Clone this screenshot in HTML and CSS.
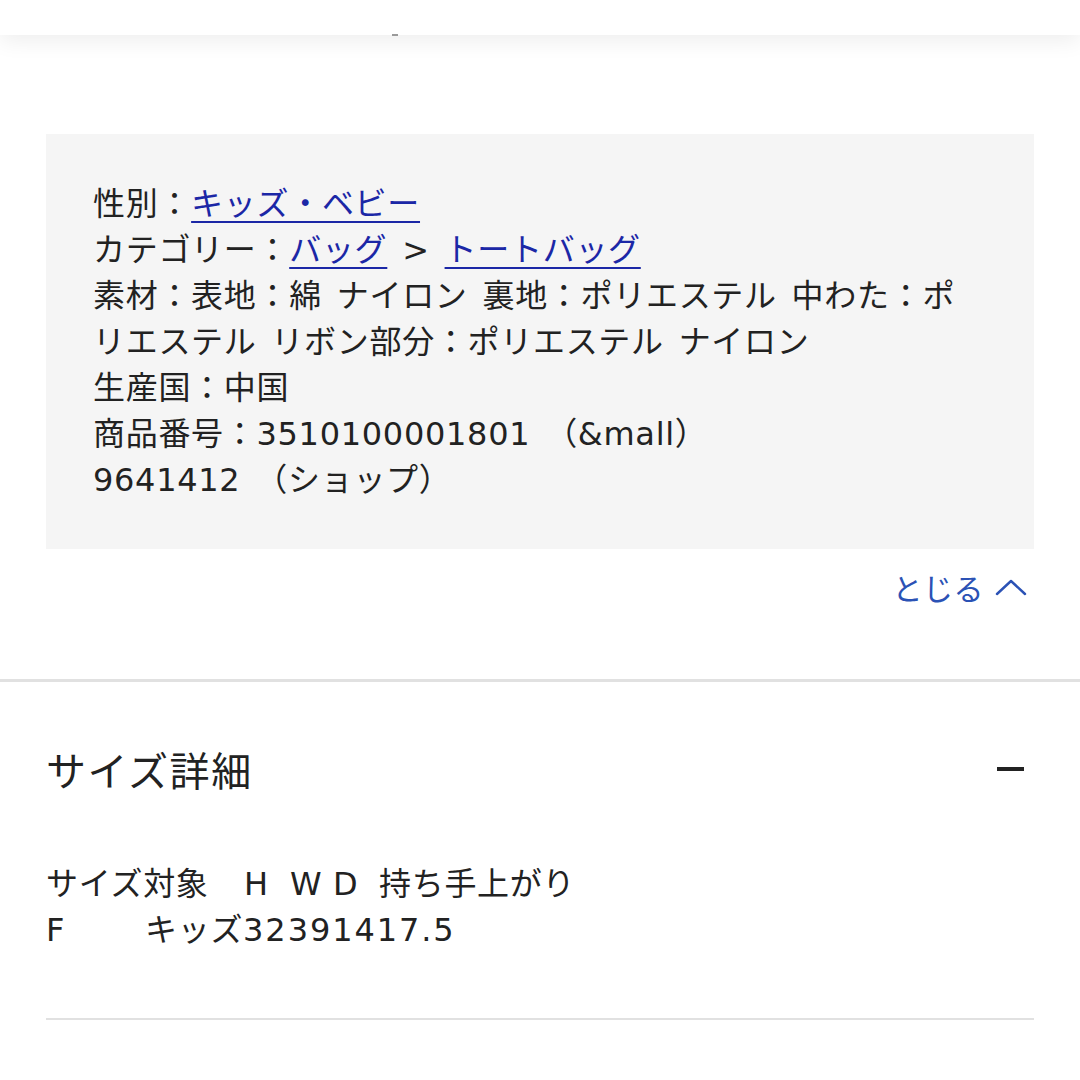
FILE: index.html
```html
<!DOCTYPE html>
<html lang="ja">
<head>
<meta charset="utf-8">
<title>商品詳細</title>
<link rel="stylesheet" href="styles.css">
</head>
<body>
<header class="topbar"><span class="topbar-mark"></span></header>
<main class="page">
  <section class="spec">
    <div class="spec-box">
      <div class="spec-line">性別：<a class="spec-link" href="#">キッズ・ベビー</a></div>
      <div class="spec-line">カテゴリー：<a class="spec-link" href="#">バッグ</a> &gt; <a class="spec-link" href="#">トートバッグ</a></div>
      <div class="spec-line">素材：表地：綿 ナイロン 裏地：ポリエステル 中わた：ポリエステル リボン部分：ポリエステル ナイロン</div>
      <div class="spec-line">生産国：中国</div>
      <div class="spec-line">商品番号：3510100001801 （&amp;mall）</div>
      <div class="spec-line">9641412 （ショップ）</div>
    </div>
    <div class="spec-toggle">
      <a class="toggle-link" href="#">とじる<svg class="chevron" width="32" height="18" viewBox="0 0 32 18" aria-hidden="true"><path d="M2 16 L16 3 L30 16" fill="none" stroke="currentColor" stroke-width="2.4" stroke-linecap="round" stroke-linejoin="round"/></svg></a>
    </div>
  </section>
  <div class="divider"></div>
  <section class="size">
    <div class="size-head">
      <h2 class="size-title">サイズ詳細</h2>
      <span class="minus"></span>
    </div>
    <div class="size-table">
      <div class="size-row">
        <span class="cell c-target">サイズ対象</span><span class="cell c-h">H</span><span class="cell c-w">W</span><span class="cell c-d">D</span><span class="cell">持ち手上がり</span>
      </div>
      <div class="size-row">
        <span class="cell c-f">F</span><span class="cell c-kids">キッズ</span><span class="cell c-num">32391417.5</span>
      </div>
    </div>
    <div class="size-rule"></div>
  </section>
</main>
</body>
</html>
```

FILE: styles.css
```css
* {
  box-sizing: border-box;
}

html, body {
  margin: 0;
  padding: 0;
  background: #ffffff;
}

body {
  font-family: "DejaVu Sans", "Noto Sans CJK JP", sans-serif;
  color: #222222;
  width: 1080px;
  overflow: hidden;
}

.topbar {
  height: 35px;
  background: #ffffff;
  box-shadow: 0 6px 22px rgba(0, 0, 0, 0.07);
  display: flex;
  align-items: flex-end;
  padding-left: 392px;
  position: relative;
}

.topbar-mark {
  width: 6px;
  height: 2px;
  background: #9a9a9a;
  margin-bottom: -1px;
}

.spec-box {
  margin: 99px 46px 0;
  padding: 47px 50px 46px 47px;
  background: #f5f5f5;
  font-size: 32px;
  line-height: 46px;
  letter-spacing: 0.7px;
  word-spacing: 4px;
}

.spec-link {
  color: #1b27a6;
  text-decoration: underline;
  text-decoration-thickness: 2px;
  text-underline-offset: 6px;
}

.spec-toggle {
  display: flex;
  justify-content: flex-end;
  margin-top: 16px;
  padding-right: 53px;
}

.toggle-link {
  display: inline-flex;
  align-items: center;
  gap: 11px;
  font-family: "Noto Sans CJK JP", sans-serif;
  font-size: 30px;
  line-height: 45px;
  letter-spacing: 0.5px;
  color: #2b52b5;
  text-decoration: none;
}

.chevron {
  display: block;
  margin-top: -2px;
}

.divider {
  margin-top: 69px;
  height: 3px;
  background: #e1e1e1;
}

.size-head {
  display: flex;
  justify-content: space-between;
  align-items: center;
  padding: 57px 56px 0 46px;
}

.size-title {
  margin: 0;
  font-family: "Noto Sans CJK JP", sans-serif;
  font-size: 40px;
  font-weight: 400;
  line-height: 60px;
  letter-spacing: 1.6px;
}

.minus {
  width: 27px;
  height: 4px;
  background: #222222;
}

.size-table {
  margin-top: 62px;
  padding-left: 46px;
  font-size: 32px;
  line-height: 46px;
  letter-spacing: 0.7px;
}

.size-row {
  display: flex;
  white-space: nowrap;
}

.c-target { width: 198px; }
.c-h { width: 46px; }
.c-w { width: 43px; }
.c-d { width: 46px; }
.c-f { width: 99px; }
.c-num { letter-spacing: 1.9px; }

.size-rule {
  margin: 65px 46px 0;
  height: 2px;
  background: #e1e1e1;
}
```
